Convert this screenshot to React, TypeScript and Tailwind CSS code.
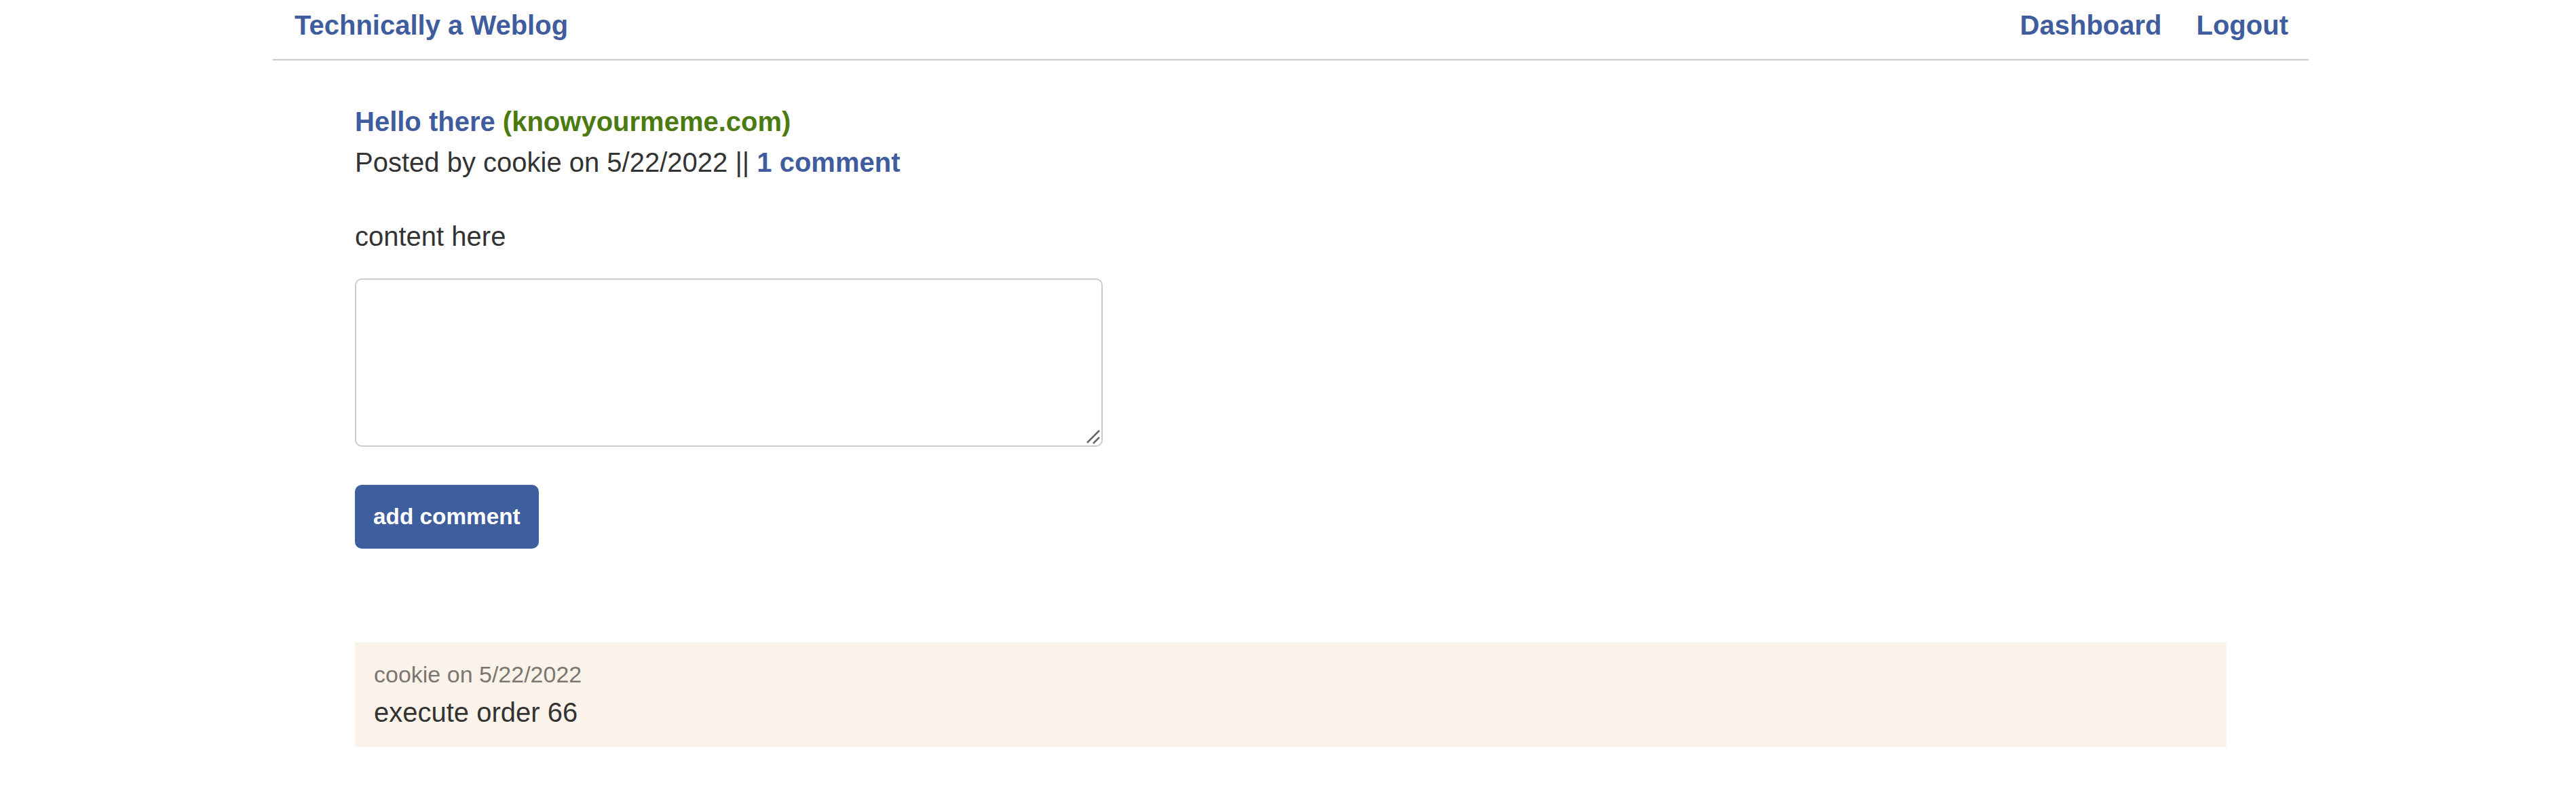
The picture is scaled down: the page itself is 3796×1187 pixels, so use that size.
export default function App() {
    return (
        <div className="min-h-screen bg-white pl-[8px] font-['Liberation_Sans',Arial,sans-serif] text-[40px] leading-[1.5] text-[#333333]">
            <div className="mx-auto w-[3000px]">
                <header className="flex items-center justify-between border-b-2 border-[#cccccc] pb-[20px] pl-[32px] pr-[30px] pt-[7px]">
                    <a href="#" className="font-bold text-[#3f5d9e]">
                        Technically a Weblog
                    </a>
                    <nav className="flex gap-[51px] font-bold text-[#3f5d9e]">
                        <a href="#">Dashboard</a>
                        <a href="#">Logout</a>
                    </nav>
                </header>
                <main className="px-[121px]">
                    <PostHeader />
                    <p className="mt-[49px]">content here</p>
                    <form className="flex flex-col items-start">
                        <div className="relative mt-[32px]">
                            {/* zoomed so the box matches the page's 250% scale */}
                            <textarea className="block h-[99.2px] w-[440.8px] resize-none rounded border border-[#cccccc] bg-white [zoom:2.5]" />
                            <svg
                                className="pointer-events-none absolute bottom-[3px] right-[3px] h-[24px] w-[24px]"
                                viewBox="0 0 24 24"
                                fill="none"
                                stroke="#666666"
                                strokeWidth="2.5"
                            >
                                <line x1="4" y1="21" x2="22" y2="3" />
                                <line x1="13" y1="22" x2="22" y2="13" />
                            </svg>
                        </div>
                        <button
                            type="button"
                            className="mt-[56px] h-[94px] rounded-[10px] bg-[#3f5e9e] px-[27px] text-[33.33px] font-bold leading-none text-white"
                        >
                            add comment
                        </button>
                    </form>
                    <Comment author="cookie" date="5/22/2022" body="execute order 66" />
                </main>
            </div>
        </div>
    )
}

function PostHeader() {
    return (
        <div className="mt-[60px]">
            <h2 className="font-bold">
                <a href="#" className="text-[#3f5d9e]">
                    Hello there
                </a>{" "}
                <span className="text-[#4b7b10]">(knowyourmeme.com)</span>
            </h2>
            <p>
                Posted by cookie on 5/22/2022 ||{" "}
                <a href="#" className="font-bold text-[#3f5d9e]">
                    1 comment
                </a>
            </p>
        </div>
    )
}

function Comment({ author, date, body }: { author: string; date: string; body: string }) {
    return (
        <div className="mt-[138px] bg-[#fbf3ea] px-[28px] pb-[21px] pt-[22px]">
            <p className="text-[34px] text-[#7a7772]">
                {author} on {date}
            </p>
            <p>{body}</p>
        </div>
    )
}
